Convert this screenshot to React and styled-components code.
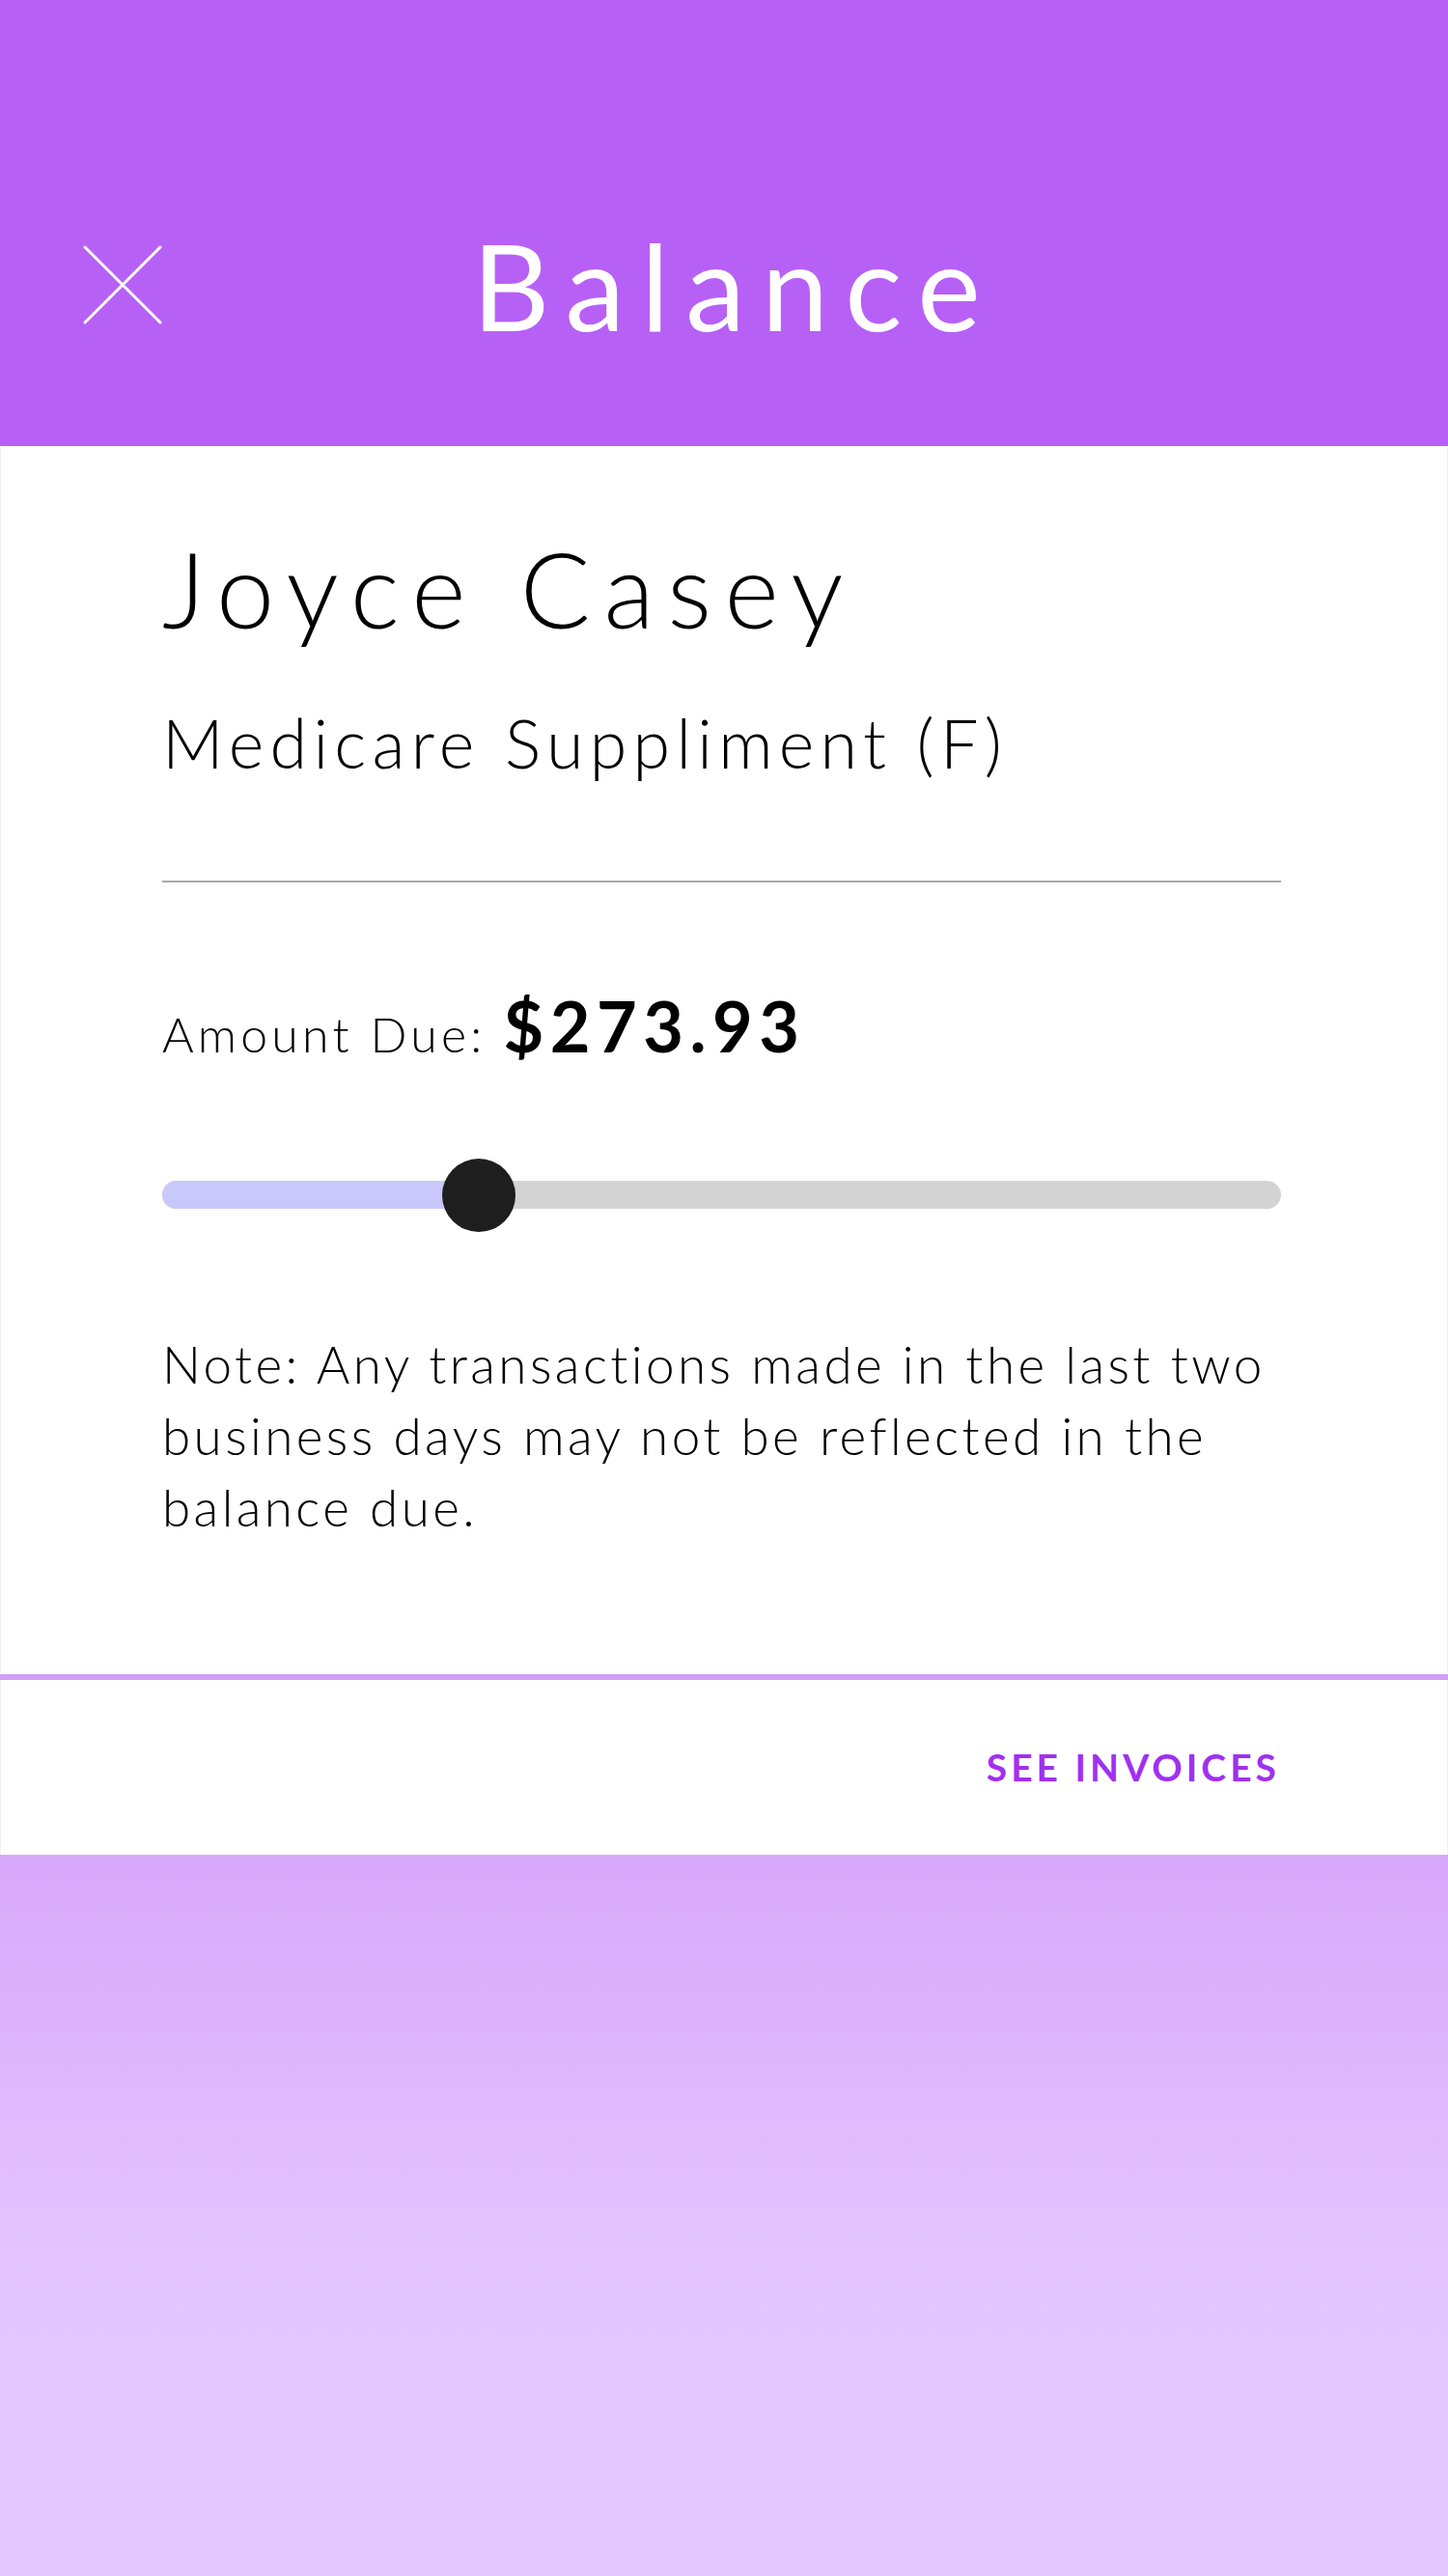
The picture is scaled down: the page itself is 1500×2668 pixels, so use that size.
import React from 'react';
import styled, { createGlobalStyle } from 'styled-components';

const GlobalStyle = createGlobalStyle`
  html, body {
    margin: 0;
    padding: 0;
  }
  body {
    font-family: Lato, 'Noto Sans', sans-serif;
    color: #000;
  }
`;

const Page = styled.div`
  min-height: 100vh;
  display: flex;
  flex-direction: column;
`;

const Header = styled.header`
  height: 462px;
  box-sizing: border-box;
  padding-top: 128px;
  background: #b760f6;
  display: grid;
  grid-template-columns: 1fr auto 1fr;
  align-items: center;
`;

const CloseButton = styled.button`
  justify-self: start;
  margin-left: 86px;
  width: 82px;
  height: 82px;
  padding: 0;
  border: none;
  background: transparent;
  cursor: pointer;
  display: flex;
`;

const Title = styled.h1`
  margin: 0 0 0 22px;
  font-size: 124px;
  line-height: 1;
  font-weight: 400;
  letter-spacing: 17px;
  color: #fff;
`;

const Card = styled.section`
  background: #fff;
  padding: 83px 172px 136px 167px;
  border-left: 1px solid #f1f1f1;
  border-right: 1px solid #f1f1f1;
`;

const Name = styled.h2`
  margin: 0;
  font-size: 108px;
  line-height: 1.2;
  font-weight: 300;
  letter-spacing: 13.5px;
`;

const Plan = styled.div`
  margin-top: 52px;
  font-size: 70px;
  line-height: 1.2;
  font-weight: 300;
  letter-spacing: 6.3px;
`;

const Divider = styled.hr`
  margin: 101px 0 0;
  border: none;
  height: 2px;
  background: #aaaaaa;
`;

const AmountRow = styled.div`
  margin-top: 105px;
  display: flex;
  align-items: baseline;
  gap: 18px;
  line-height: 1.2;
`;

const AmountLabel = styled.span`
  font-size: 50px;
  font-weight: 300;
  letter-spacing: 4.2px;
`;

const AmountValue = styled.span`
  font-size: 72px;
  font-weight: 700;
  letter-spacing: 6.5px;
`;

const Slider = styled.div`
  position: relative;
  margin-top: 95px;
  height: 76px;
  display: flex;
  align-items: center;
`;

const Track = styled.div`
  flex: 1;
  height: 29px;
  border-radius: 15px;
  background: #d3d3d3;
  overflow: hidden;
`;

const Fill = styled.div`
  height: 100%;
  background: #c8c8fa;
`;

const Thumb = styled.div`
  position: absolute;
  top: 0;
  width: 76px;
  height: 76px;
  margin-left: -38px;
  border-radius: 50%;
  background: #1e1e1e;
`;

const Note = styled.p`
  margin: 100px 0 0;
  font-size: 53px;
  line-height: 74px;
  font-weight: 300;
  letter-spacing: 3.4px;
`;

const Accent = styled.div`
  height: 6px;
  background: #d29ef8;
`;

const Footer = styled.footer`
  height: 181px;
  background: #fff;
  display: flex;
  align-items: center;
  justify-content: flex-end;
  padding-right: 173px;
  border-left: 1px solid #f1f1f1;
  border-right: 1px solid #f1f1f1;
`;

const LinkButton = styled.button`
  border: none;
  background: transparent;
  padding: 0;
  font-family: Lato, 'Noto Sans', sans-serif;
  font-size: 39px;
  font-weight: 700;
  letter-spacing: 4px;
  color: #a030f0;
  cursor: pointer;
`;

const Backdrop = styled.div`
  flex: 1;
  background: linear-gradient(180deg, #d8a8fa 0%, #e4c6fe 60%, #e4c8ff 100%);
`;

const CloseIcon = () => (
  <svg width="82" height="82" viewBox="0 0 82 82" fill="none">
    <path d="M2 2 L80 80 M80 2 L2 80" stroke="#fff" strokeWidth="3" strokeLinecap="round" />
  </svg>
);

export default function App() {
  const progress = 28.3;

  return (
    <Page>
      <GlobalStyle />
      <Header>
        <CloseButton aria-label="Close">
          <CloseIcon />
        </CloseButton>
        <Title>Balance</Title>
      </Header>
      <Card>
        <Name>Joyce Casey</Name>
        <Plan>Medicare Suppliment (F)</Plan>
        <Divider />
        <AmountRow>
          <AmountLabel>Amount Due:</AmountLabel>
          <AmountValue>$273.93</AmountValue>
        </AmountRow>
        <Slider>
          <Track>
            <Fill style={{ width: `${progress}%` }} />
          </Track>
          <Thumb style={{ left: `${progress}%` }} />
        </Slider>
        <Note>
          Note: Any transactions made in the last two business days may not be reflected in the
          balance due.
        </Note>
      </Card>
      <Accent />
      <Footer>
        <LinkButton>SEE INVOICES</LinkButton>
      </Footer>
      <Backdrop />
    </Page>
  );
}
